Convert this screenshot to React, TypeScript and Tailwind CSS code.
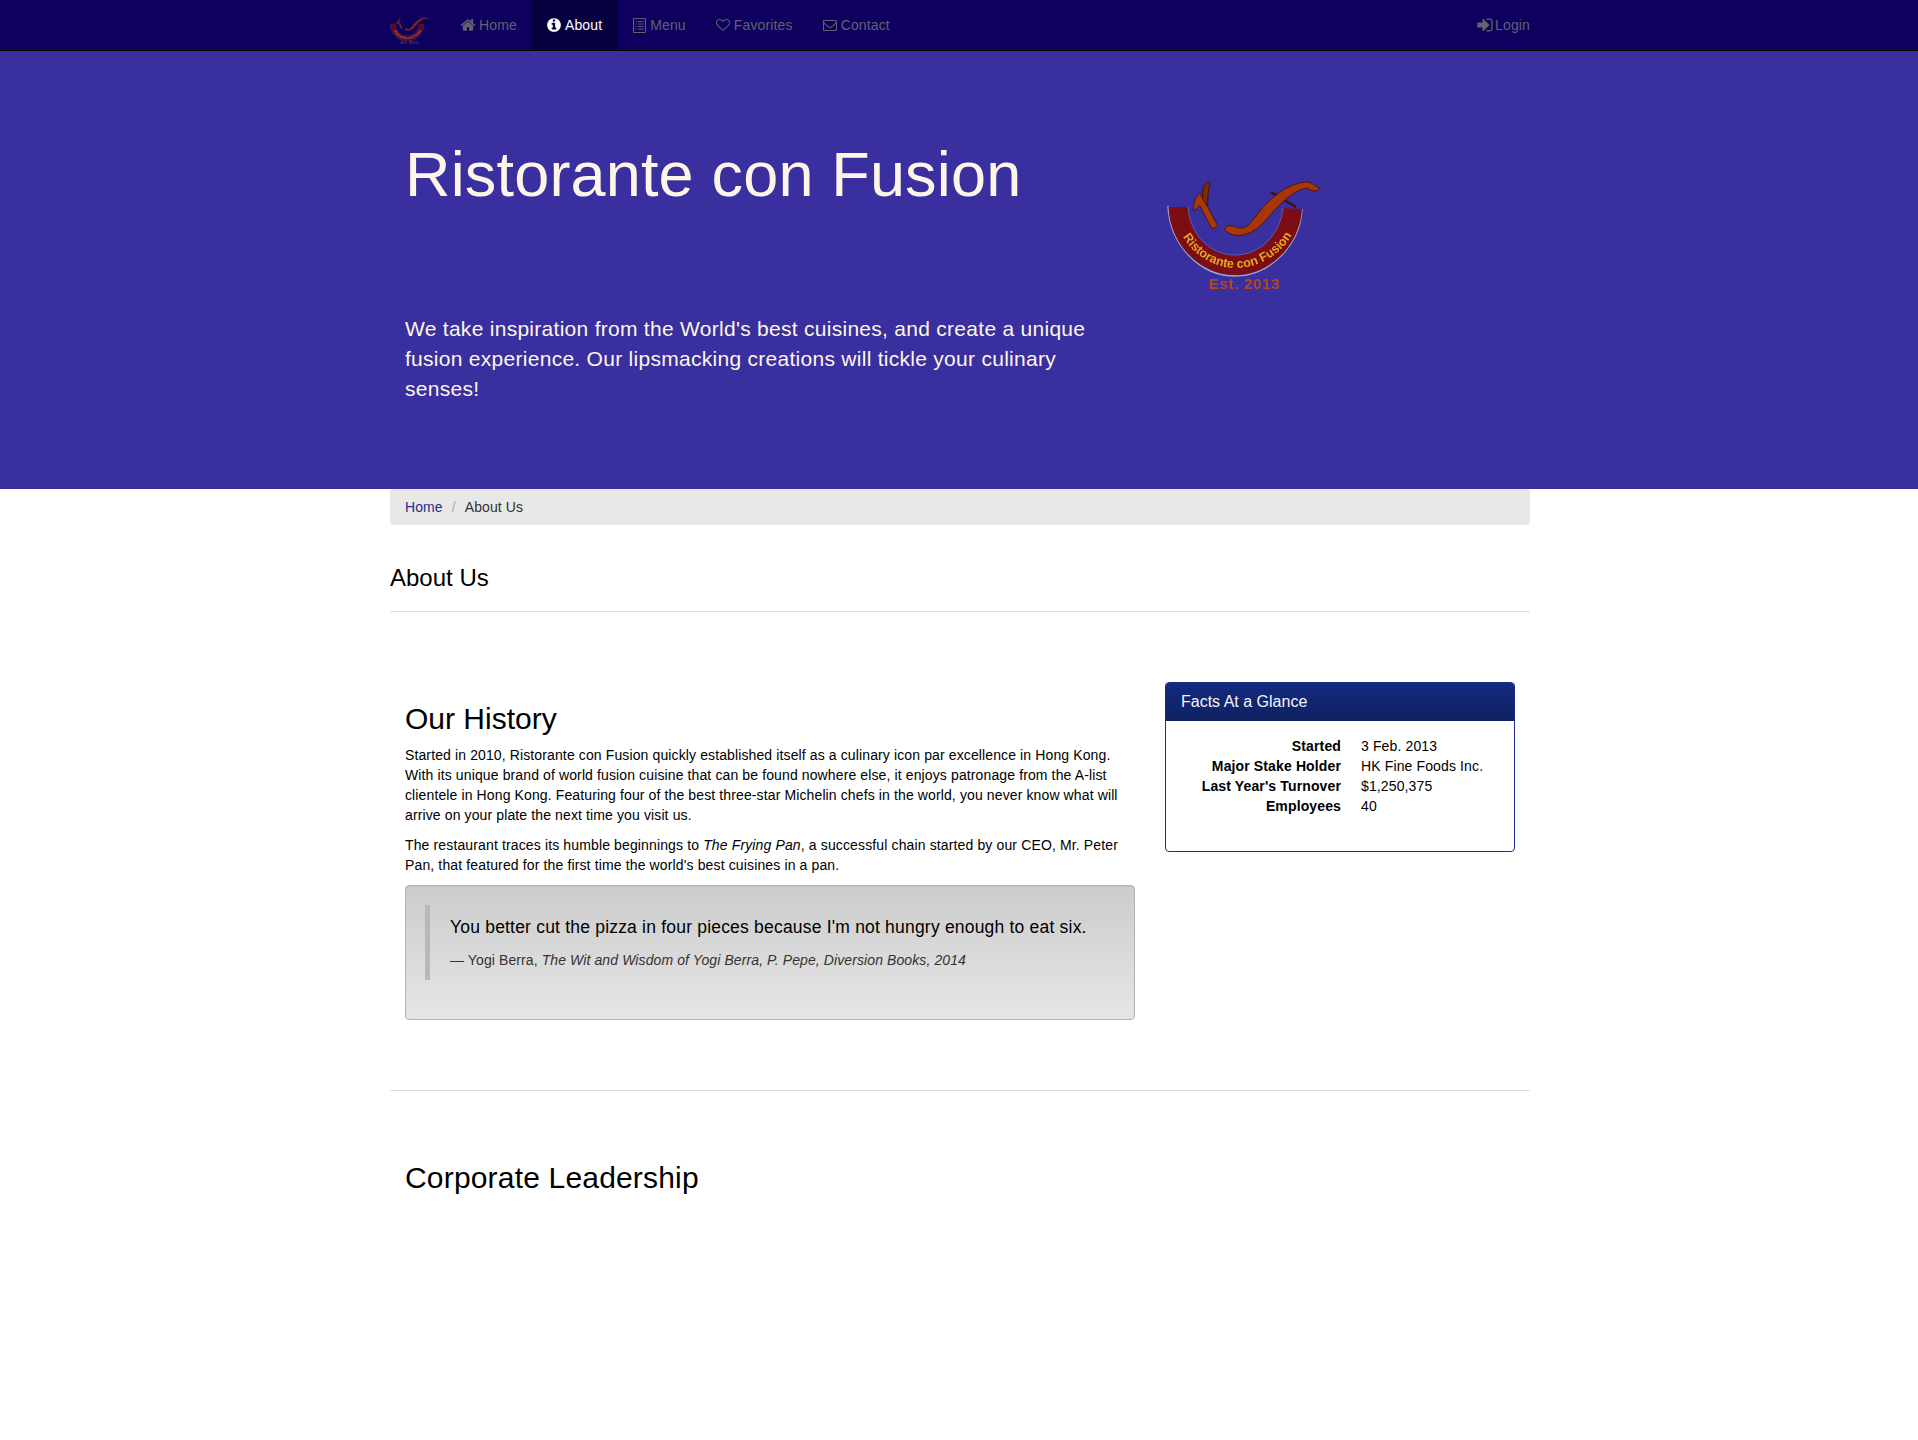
import React from "react";

function Fa({ d, size = 14, offset = "" }: { d: string; size?: number; offset?: string }) {
  return (
    <svg viewBox="0 0 1792 1792" width={size} height={size} fill="currentColor" className={`block shrink-0 ${offset}`}>
      <path d={d} />
    </svg>
  );
}

const home = "M1472 992v480q0 26-19 45t-45 19h-384v-384h-256v384h-384q-26 0-45-19t-19-45v-480q0-1 .5-3t.5-3l575-474 575 474q1 2 1 6zm223-69l-62 74q-8 9-21 11h-3q-13 0-21-7l-692-577-692 577q-12 8-24 7-13-2-21-11l-62-74q-8-10-7-23.5t11-21.5l719-599q32-26 76-26t76 26l244 204v-195q0-14 9-23t23-9h192q14 0 23 9t9 23v408l219 182q10 8 11 21.5t-7 23.5z";
const info = "M1152 1376v-160q0-14-9-23t-23-9h-96v-512q0-14-9-23t-23-9h-320q-14 0-23 9t-9 23v160q0 14 9 23t23 9h96v320h-96q-14 0-23 9t-9 23v160q0 14 9 23t23 9h448q14 0 23-9t9-23zm-128-896v-160q0-14-9-23t-23-9h-192q-14 0-23 9t-9 23v160q0 14 9 23t23 9h192q14 0 23-9t9-23zm640 416q0 209-103 385.5t-279.5 279.5-385.5 103-385.5-103-279.5-279.5-103-385.5 103-385.5 279.5-279.5 385.5-103 385.5 103 279.5 279.5 103 385.5z";
const signIn = "M1312 896q0 26-19 45l-544 544q-19 19-45 19t-45-19-19-45v-288h-448q-26 0-45-19t-19-45v-384q0-26 19-45t45-19h448v-288q0-26 19-45t45-19 45 19l544 544q19 19 19 45zm352-352v704q0 119-84.5 203.5t-203.5 84.5h-320q-13 0-22.5-9.5t-9.5-22.5q0-4-1-20t-.5-26.5 3-23.5 10-19.5 20.5-6.5h320q66 0 113-47t47-113v-704q0-66-47-113t-113-47h-312l-11.5-1-11.5-3-8-5.5-7-9-2-13.5q0-4-1-20t-.5-26.5 3-23.5 10-19.5 20.5-6.5h320q119 0 203.5 84.5t84.5 203.5z";
const heart = "M1664 596q0-81-21.5-143t-55-98.5-81.5-59.5-94-31-98-8-112 25.5-110.5 64-86.5 72-60 61.5q-18 22-49 22t-49-22q-24-28-60-61.5t-86.5-72-110.5-64-112-25.5-98 8-94 31-81.5 59.5-55 98.5-21.5 143q0 168 187 355l581 560 580-559q188-188 188-356zm128 0q0 221-229 450l-623 600q-18 18-44 18t-44-18l-624-602q-10-8-27.5-26t-55.5-65.5-68-97.5-53.5-121-23.5-138q0-220 127-344t351-124q62 0 126.5 21.5t120 58 95.5 68.5 76 68q36-36 76-68t95.5-68.5 120-58 126.5-21.5q224 0 351 124t127 344z";
const envelope = "M1664 1504v-768q-32 36-69 66-268 206-426 338-51 43-83 67t-86.5 48.5-102.5 24.5h-2q-48 0-102.5-24.5t-86.5-48.5-83-67q-158-132-426-338-37-30-69-66v768q0 13 9.5 22.5t22.5 9.5h1472q13 0 22.5-9.5t9.5-22.5zm0-1051v-24.5l-.5-13-3-12.5-5.5-9-9-7.5-14-2.5h-1472q-13 0-22.5 9.5t-9.5 22.5q0 168 147 284 193 152 401 317 6 5 35 29.5t46 37.5 44.5 31.5 50.5 27.5 43 9h2q20 0 43-9t50.5-27.5 44.5-31.5 46-37.5 35-29.5q208-165 401-317 54-43 100.5-115.5t46.5-131.5zm128-37v1088q0 66-47 113t-113 47h-1472q-66 0-113-47t-47-113v-1088q0-66 47-113t113-47h1472q66 0 113 47t47 113z";

function MenuIcon() {
  return (
    <svg viewBox="0 0 13 15" width={13} height={15} className="block shrink-0 ml-[1px]" fill="none" stroke="currentColor" strokeWidth="1.1">
      <rect x="0.5" y="0.5" width="12" height="14" rx="0.8" />
      <path d="M2.5 3.5h1M5 3.5h5.5M2.5 6h1M5 6h5.5M2.5 8.5h1M5 8.5h5.5M2.5 11h1M5 11h5.5" />
    </svg>
  );
}

function Logo({ small }: { small?: boolean }) {
  const id = small ? "arcS" : "arcL";
  return (
    <svg
      viewBox={small ? "28 22 150 105" : "0 0 200 140"}
      className={small ? "block w-[38px] h-[27px] opacity-70 overflow-hidden" : "block w-[200px] h-[140px] blur-[0.5px]"}
    >
      <path d="M28 46 C30 85 60 116 95 116 C130 116 160 85 162 49" fill="none" stroke="#9ea6c8" strokeWidth="1.5" />
      <path d="M28.5 47 C30 85 60 115 95 115 C130 115 160 85 162 49 L143 48 C140 75 120 95 95 95 C70 95 50 75 48 47 Z" fill="#7c0d14" />
      <path d="M48 47 C50 75 70 95 95 95 C120 95 140 75 143 48" fill="none" stroke="#5f6cc0" strokeWidth="0.8" />
      <path id={id} d="M36 62 C46 92 72 108 96 108 C120 108 148 92 158 62" fill="none" />
      <text fontFamily="'Liberation Sans', sans-serif" fontSize="12.5" fontWeight="700" fill="#eaa51e">
        <textPath href={`#${id}`} startOffset="10%">Ristorante con Fusion</textPath>
      </text>
      <text x="69" y="129" fontFamily="'Liberation Sans', sans-serif" fontSize="15" fontWeight="700" letterSpacing="0.7" fill="#b5471a">Est. 2013</text>
      <path d="M131 32 L156 47" stroke="#3a1208" strokeWidth="2.4" />
      <path d="M53 50 C54 42 56 36 60 33 L78 66 L72 69 L60 46 C58 46 57 48 56 50 Z" fill="#a83a08" stroke="#3a1208" strokeWidth="0.8" />
      <path d="M70 22 C64 22 61 30 63 40 L68 46 C67 36 69 29 70 22 Z" fill="#7e2a06" stroke="#3a1208" strokeWidth="0.8" />
      <path d="M85 68 C88 64 94 66 99 68 C106 69 110 64 116 56 C128 40 144 25 165 22 C172 21 175 27 180 28 C177 33 171 31 167 28 C152 30 136 48 126 60 C116 72 104 77 94 75 C89 74 84 71 85 68 Z" fill="#a83606" stroke="#3a1208" strokeWidth="0.8" />
    </svg>
  );
}

function NavItem({ icon, label, active }: { icon: React.ReactNode; label: string; active?: boolean }) {
  return (
    <a className={`flex items-center h-[50px] px-[15px] text-[14px] tracking-[0.14px] ${active ? "bg-[#06003f] text-white" : "text-[#62626e]"}`}>
      <span className="w-[18px] flex items-center">{icon}</span>
      {label}
    </a>
  );
}

export default function App() {
  return (
    <div className="overflow-hidden">
      <div className="w-[1920px] min-h-[1440px] bg-white text-[14px] leading-[20px] text-black font-['Liberation_Sans',Arial,sans-serif]">
        <nav className="h-[51px] bg-[#0d005e] border-b border-black">
          <div className="w-[1140px] mx-auto flex h-[50px]">
            <div className="w-[56px] pt-[17px] shrink-0"><Logo small /></div>
            <NavItem icon={<Fa d={home} size={16} offset="-ml-[1px]" />} label="Home" />
            <NavItem active icon={<Fa d={info} size={16} offset="-ml-[1px]" />} label="About" />
            <NavItem icon={<MenuIcon />} label="Menu" />
            <NavItem icon={<Fa d={heart} />} label="Favorites" />
            <NavItem icon={<Fa d={envelope} />} label="Contact" />
            <div className="ml-auto -mr-[15px]">
              <NavItem icon={<Fa d={signIn} size={18} offset="-ml-[1px]" />} label="Login" />
            </div>
          </div>
        </nav>

        <header className="h-[438px] bg-[#3a2f9e] text-[#fdf6e8]">
          <div className="w-[1140px] mx-auto flex">
            <div className="w-[760px] px-[15px] pt-[89px]">
              <h1 className="text-[63px] leading-[69px] font-normal tracking-[0.17px]">Ristorante con Fusion</h1>
              <p className="mt-[105px] text-[21px] leading-[30px] font-light tracking-[0.28px]">
                We take inspiration from the World's best cuisines, and create a unique fusion experience. Our lipsmacking creations will tickle your culinary senses!
              </p>
            </div>
            <div className="-ml-[10px] mt-[109px]"><Logo /></div>
          </div>
        </header>

        <main className="w-[1140px] mx-auto">
          <ol className="flex h-[36px] items-center px-[15px] bg-[#e8e8e8] rounded-[4px] mb-[40px] text-[#333] tracking-[0.1px]">
            <li className="text-[#1f2f8a]">Home</li>
            <li className="px-[9px] text-[#aaa]">/</li>
            <li>About Us</li>
          </ol>
          <h3 className="text-[24px] leading-[26px] font-normal">About Us</h3>
          <hr className="mt-[20px] mb-[20px] border-t border-[#ddd]" />

          <section className="flex pt-[50px] pb-[50px] border-b border-[#ddd]">
            <div className="w-[760px] px-[15px]">
              <h2 className="mt-[20px] mb-[10px] text-[30px] leading-[33px] font-normal">Our History</h2>
              <p className="mb-[10px] tracking-[0.12px]">
                Started in 2010, Ristorante con Fusion quickly established itself as a culinary icon par excellence in Hong Kong. With its unique brand of world fusion cuisine that can be found nowhere else, it enjoys patronage from the A-list clientele in Hong Kong. Featuring four of the best three-star Michelin chefs in the world, you never know what will arrive on your plate the next time you visit us.
              </p>
              <p className="mb-[10px] tracking-[0.135px]">
                The restaurant traces its humble beginnings to <em>The Frying Pan</em>, a successful chain started by our CEO, Mr. Peter Pan, that featured for the first time the world's best cuisines in a pan.
              </p>
              <div className="mb-[20px] p-[19px] border border-[#b3b3b3] rounded-[4px] bg-gradient-to-b from-[#cccccc] to-[#e6e6e6] shadow-[inset_0_1px_1px_rgba(0,0,0,0.05)]">
                <blockquote className="mb-[20px] py-[10px] px-[20px] border-l-[5px] border-[#b8b8b8]">
                  <p className="mb-[10px] text-[17.5px] leading-[25px] tracking-[0.2px]">You better cut the pizza in four pieces because I'm not hungry enough to eat six.</p>
                  <footer className="text-[14px] leading-[20px] text-[#333] tracking-[0.1px]">— Yogi Berra, <cite className="italic">The Wit and Wisdom of Yogi Berra, P. Pepe, Diversion Books, 2014</cite></footer>
                </blockquote>
              </div>
            </div>
            <div className="w-[380px] px-[15px]">
              <div className="border border-[#1a2f8a] rounded-[4px] overflow-hidden">
                <div className="h-[38px] px-[15px] flex items-center text-[16px] text-[#f5f5f5] bg-gradient-to-b from-[#132a80] to-[#0f2060]">Facts At a Glance</div>
                <dl className="p-[15px] pb-[35px] tracking-[0.13px]">
                  {[
                    ["Started", "3 Feb. 2013"],
                    ["Major Stake Holder", "HK Fine Foods Inc."],
                    ["Last Year's Turnover", "$1,250,375"],
                    ["Employees", "40"],
                  ].map(([k, v]) => (
                    <div key={k} className="flex">
                      <dt className="w-[160px] text-right font-bold whitespace-nowrap">{k}</dt>
                      <dd className="ml-[20px]">{v}</dd>
                    </div>
                  ))}
                </dl>
              </div>
            </div>
          </section>

          <section className="pt-[50px] px-[15px]">
            <h2 className="mt-[20px] text-[30px] leading-[33px] font-normal tracking-[0.18px]">Corporate Leadership</h2>
          </section>
        </main>
      </div>
    </div>
  );
}
